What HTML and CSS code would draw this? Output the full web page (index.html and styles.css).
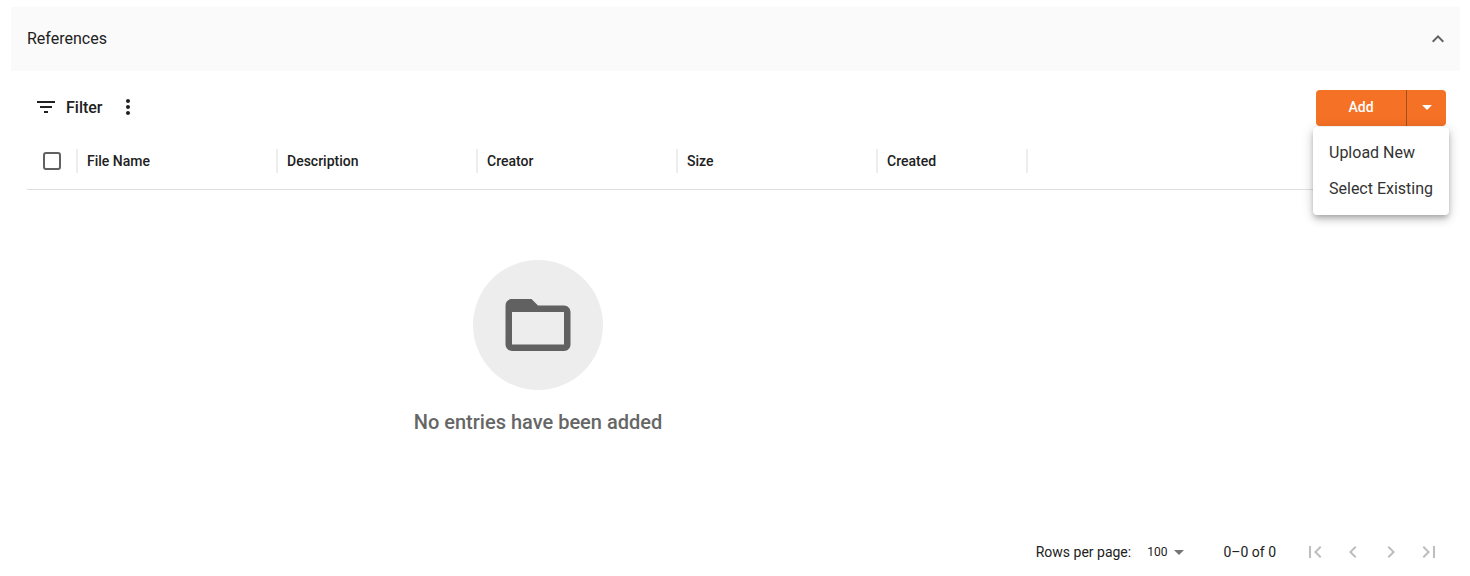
FILE: index.html
```html
<!DOCTYPE html>
<html lang="en">
<head>
<meta charset="utf-8">
<title>References</title>
<link rel="stylesheet" href="styles.css">
</head>
<body>
<section class="panel">
  <header class="panel-head">
    <span class="panel-title">References</span>
    <svg class="chevron" viewBox="0 0 24 24" width="24" height="24"><path d="M12 8l-6 6 1.41 1.41L12 10.83l4.59 4.58L18 14z"/></svg>
  </header>
  <div class="panel-body">
    <div class="toolbar">
      <div class="tools">
        <svg class="filter-icon" viewBox="0 0 24 24" width="24" height="24"><path d="M10 18h4v-2h-4v2zM3 6v2h18V6H3zm3 7h12v-2H6v2z"/></svg>
        <span class="filter-label">Filter</span>
        <svg class="more-icon" viewBox="0 0 24 24" width="24" height="24"><path d="M12 8c1.1 0 2-.9 2-2s-.9-2-2-2-2 .9-2 2 .9 2 2 2zm0 2c-1.1 0-2 .9-2 2s.9 2 2 2 2-.9 2-2-.9-2-2-2zm0 6c-1.1 0-2 .9-2 2s.9 2 2 2 2-.9 2-2-.9-2-2-2z"/></svg>
      </div>
      <div class="split">
        <button class="split-main" type="button">Add</button>
        <button class="split-arrow" type="button" aria-label="More">
          <svg viewBox="0 0 24 24" width="24" height="24"><path d="M7 10l5 5 5-5z"/></svg>
        </button>
        <ul class="menu">
          <li>Upload New</li>
          <li>Select Existing</li>
        </ul>
      </div>
    </div>
    <div class="grid-head">
      <div class="cell-check"><span class="checkbox"></span></div>
      <div class="col">File Name</div>
      <div class="col">Description</div>
      <div class="col">Creator</div>
      <div class="col">Size</div>
      <div class="col col-short">Created</div>
    </div>
    <div class="empty">
      <div class="empty-circle">
        <svg viewBox="0 0 24 24" width="78" height="78"><path d="M20 6h-8l-2-2H4c-1.1 0-1.99.9-1.99 2L2 18c0 1.1.9 2 2 2h16c1.1 0 2-.9 2-2V8c0-1.1-.9-2-2-2zm0 12H4V8h16v10z"/></svg>
      </div>
      <p class="empty-text">No entries have been added</p>
    </div>
    <footer class="pager">
      <span class="pager-label">Rows per page:</span>
      <span class="pager-select">100<svg viewBox="0 0 24 24" width="24" height="24"><path d="M7 10l5 5 5-5z"/></svg></span>
      <span class="pager-range">0–0 of 0</span>
      <div class="pager-nav">
        <svg viewBox="0 0 24 24" width="24" height="24"><path d="M18.41 16.59L13.82 12l4.59-4.59L17 6l-6 6 6 6zM6 6h2v12H6z"/></svg>
        <svg viewBox="0 0 24 24" width="24" height="24"><path d="M15.41 7.41L14 6l-6 6 6 6 1.41-1.41L10.83 12z"/></svg>
        <svg viewBox="0 0 24 24" width="24" height="24"><path d="M10 6L8.59 7.41 13.17 12l-4.58 4.59L10 18l6-6z"/></svg>
        <svg viewBox="0 0 24 24" width="24" height="24"><path d="M5.59 7.41L10.18 12l-4.59 4.59L7 18l6-6-6-6zM16 6h2v12h-2z"/></svg>
      </div>
    </footer>
  </div>
</section>
</body>
</html>
```
FILE: styles.css
```css
* { box-sizing: border-box; }
html, body { margin: 0; height: 576px; overflow: hidden; background: #fff; }
body {
  font-family: Roboto, "Liberation Sans", sans-serif;
  color: #212121;
  padding: 7px 10px 0 11px;
}
.panel-head {
  height: 64px;
  background: #fafafa;
  display: flex;
  align-items: center;
  justify-content: space-between;
  padding: 0 10px 0 16px;
}
.panel-title { font-size: 16px; line-height: 24px; }
.chevron { fill: #616161; }
.panel-body { padding: 0 11px 0 16px; }
.toolbar {
  height: 73px;
  padding: 1px 3px 0 0;
  display: flex;
  align-items: center;
  justify-content: space-between;
}
.tools { display: flex; align-items: center; padding-left: 7px; margin-bottom: 2px; }
.filter-icon { fill: #212121; }
.filter-label { font-size: 16px; font-weight: 500; margin-left: 8px; }
.more-icon { fill: #212121; margin-left: 13px; }
.split { position: relative; display: flex; height: 36px; }
.split button {
  border: 0;
  background: #f57125;
  color: #fff;
  padding: 0 0 2px;
  font: 500 14px Roboto, sans-serif;
  height: 36px;
}
.split-main { width: 90px; border-radius: 4px 0 0 4px; }
.split-arrow {
  width: 40px;
  border-radius: 0 4px 4px 0;
  border-left: 1px solid #a4501c !important;
  display: flex;
  align-items: center;
  justify-content: center;
}
.split-arrow svg { fill: #fff; }
.menu {
  position: absolute;
  top: 37px;
  right: -3px;
  width: 136px;
  margin: 0;
  padding: 8px 0;
  list-style: none;
  background: #fff;
  border-radius: 4px;
  box-shadow: 0 3px 5px -1px rgba(0,0,0,.2), 0 5px 8px 0 rgba(0,0,0,.14), 0 1px 14px 0 rgba(0,0,0,.12);
  z-index: 2;
}
.menu li { height: 36px; line-height: 36px; padding-left: 16px; font-size: 16px; color: #333; white-space: nowrap; }
.grid-head {
  height: 46px;
  padding-bottom: 12px;
  display: flex;
  align-items: center;
  border-bottom: 1px solid #e0e0e0;
  font-size: 14px;
  font-weight: 500;
}
.cell-check { width: 51px; height: 24px; padding-left: 16px; display: flex; align-items: center; border-right: 2px solid #eee; }
.checkbox { width: 18px; height: 18px; border: 2px solid #616161; border-radius: 3px; }
.col { width: 200px; height: 24px; line-height: 24px; padding-left: 9px; border-right: 2px solid #eee; }
.col-short { width: 150px; }
.empty {
  width: 1022px;
  padding-top: 70px;
  display: flex;
  flex-direction: column;
  align-items: center;
}
.empty-circle {
  width: 130px;
  height: 130px;
  border-radius: 50%;
  background: #ededed;
  display: flex;
  align-items: center;
  justify-content: center;
}
.empty-circle svg { fill: #616161; }
.empty-text { margin: 20px 0 0; font-size: 20px; line-height: 24px; font-weight: 500; color: #666; }
.pager {
  margin-top: 92px;
  height: 52px;
  display: flex;
  align-items: center;
  justify-content: flex-end;
  font-size: 14px;
}
.pager-label { white-space: nowrap; }
.pager-select { display: flex; align-items: center; margin-left: 16px; font-size: 12px; }
.pager-select svg { fill: #757575; }
.pager-range { margin-left: 32px; }
.pager-nav { display: flex; gap: 14px; margin-left: 27px; margin-right: 8px; }
.pager-nav svg { fill: #bdbdbd; }
```
